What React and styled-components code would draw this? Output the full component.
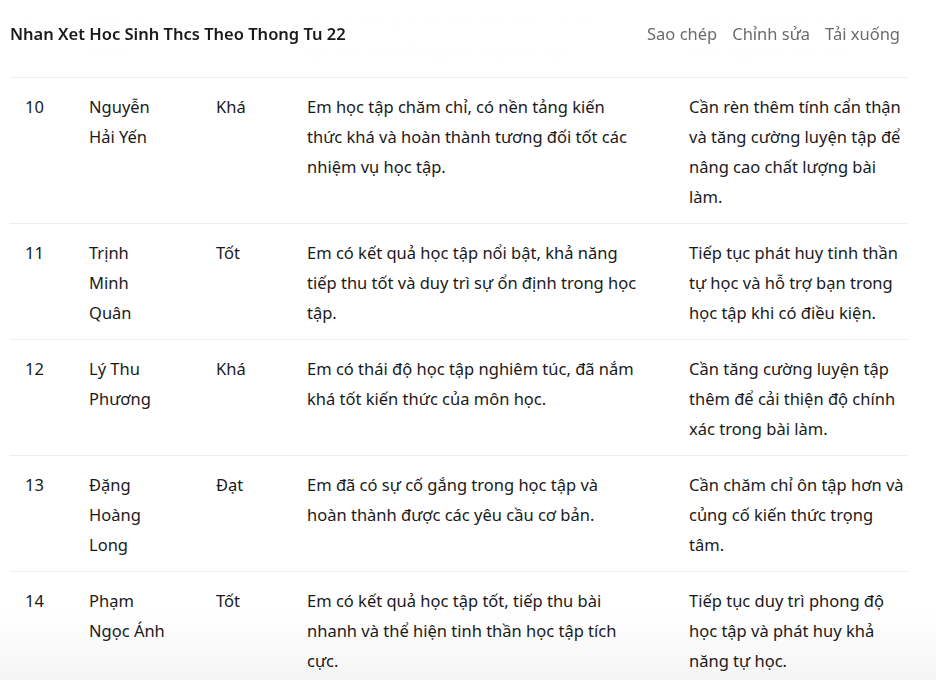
import React, { useLayoutEffect, useRef } from 'react';
import styled, { createGlobalStyle } from 'styled-components';

const rows = [
  { stt: 1, name: 'Nguyễn Văn An', level: 'Tốt', note: 'Em có ý thức học tập tốt, tích cực phát biểu xây dựng bài và hoàn thành xuất sắc nhiệm vụ.', advice: 'Tiếp tục phát huy và giúp đỡ các bạn cùng tiến bộ.' },
  { stt: 2, name: 'Trần Thị Bình', level: 'Khá', note: 'Em chăm chỉ, nắm được kiến thức cơ bản của môn học.', advice: 'Cần mạnh dạn hơn khi trao đổi ý kiến trong lớp.' },
  { stt: 3, name: 'Lê Hoàng Cường', level: 'Đạt', note: 'Em đã cố gắng hoàn thành các yêu cầu cơ bản của môn học.', advice: 'Cần tập trung hơn trong giờ học và làm bài đầy đủ.' },
  { stt: 4, name: 'Phạm Minh Dũng', level: 'Tốt', note: 'Em tiếp thu bài nhanh, vận dụng kiến thức linh hoạt vào thực tế.', advice: 'Tiếp tục duy trì kết quả học tập.' },
  { stt: 5, name: 'Hoàng Thu Hà', level: 'Khá', note: 'Em có tinh thần học tập nghiêm túc, tham gia tích cực hoạt động nhóm.', advice: 'Cần rèn luyện thêm kỹ năng trình bày.' },
  { stt: 6, name: 'Vũ Đức Huy', level: 'Đạt', note: 'Em có tiến bộ so với đầu năm học.', advice: 'Cần ôn tập thường xuyên để củng cố kiến thức.' },
  { stt: 7, name: 'Đỗ Thị Lan', level: 'Tốt', note: 'Em học tập chăm chỉ, có nhiều sáng tạo trong giải quyết vấn đề.', advice: 'Tiếp tục phát huy năng lực tự học.' },
  { stt: 8, name: 'Bùi Văn Nam', level: 'Khá', note: 'Em nắm vững kiến thức cơ bản, làm bài tương đối cẩn thận.', advice: 'Cần luyện tập thêm các dạng bài nâng cao.' },
  { stt: 9, name: 'Ngô Thị Oanh', level: 'Tốt', note: 'Em có kết quả học tập tốt, tích cực tham gia các hoạt động học tập của lớp.', advice: 'Tiếp tục phát huy và chia sẻ kinh nghiệm học tập.' },
  { stt: 10, name: 'Nguyễn Hải Yến', level: 'Khá', note: 'Em học tập chăm chỉ, có nền tảng kiến thức khá và hoàn thành tương đối tốt các nhiệm vụ học tập.', advice: 'Cần rèn thêm tính cẩn thận và tăng cường luyện tập để nâng cao chất lượng bài làm.' },
  { stt: 11, name: 'Trịnh Minh Quân', level: 'Tốt', note: 'Em có kết quả học tập nổi bật, khả năng tiếp thu tốt và duy trì sự ổn định trong học tập.', advice: 'Tiếp tục phát huy tinh thần tự học và hỗ trợ bạn trong học tập khi có điều kiện.' },
  { stt: 12, name: 'Lý Thu Phương', level: 'Khá', note: 'Em có thái độ học tập nghiêm túc, đã nắm khá tốt kiến thức của môn học.', advice: 'Cần tăng cường luyện tập thêm để cải thiện độ chính xác trong bài làm.' },
  { stt: 13, name: 'Đặng Hoàng Long', level: 'Đạt', note: 'Em đã có sự cố gắng trong học tập và hoàn thành được các yêu cầu cơ bản.', advice: 'Cần chăm chỉ ôn tập hơn và củng cố kiến thức trọng tâm.' },
  { stt: 14, name: 'Phạm Ngọc Ánh', level: 'Tốt', note: 'Em có kết quả học tập tốt, tiếp thu bài nhanh và thể hiện tinh thần học tập tích cực.', advice: 'Tiếp tục duy trì phong độ học tập và phát huy khả năng tự học.' },
  { stt: 15, name: 'Trương Văn Quý', level: 'Khá', note: 'Em có ý thức học tập, hoàn thành đầy đủ bài tập được giao.', advice: 'Cần chủ động hơn trong việc tự học ở nhà.' },
];

const GlobalStyle = createGlobalStyle`
  html, body {
    margin: 0;
    padding: 0;
    background: #fff;
  }
  body {
    font-family: 'Noto Sans', 'Open Sans', sans-serif;
    color: #1a1a1a;
  }
`;

const Frame = styled.div`
  position: relative;
  height: 680px;
  overflow: hidden;
`;

const Scroller = styled.div`
  height: 100%;
  overflow-y: auto;
  scrollbar-width: none;
  &::-webkit-scrollbar {
    display: none;
  }
`;

// sticky bar, the rows scroll under it
const Header = styled.header`
  position: sticky;
  top: 0;
  z-index: 2;
  height: 66px;
  display: flex;
  align-items: center;
  justify-content: space-between;
  padding: 0 36px 0 10px;
  background: rgba(255, 255, 255, 0.985);
  backdrop-filter: blur(24px);
`;

const Title = styled.h1`
  margin: 0;
  font-size: 16.5px;
  font-weight: 600;
  color: #1a1a1a;
`;

const Actions = styled.nav`
  display: flex;
  gap: 15px;
`;

const Action = styled.a`
  font-size: 16.5px;
  color: #6b6b6b;
  cursor: pointer;
`;

const Table = styled.div`
  width: 898px;
  margin-left: 10px;
  padding-bottom: 40px;
`;

const Row = styled.div`
  display: grid;
  grid-template-columns: 64px 127px 91px 382px 234px;
  border-bottom: 1px solid #eeeeee;
  font-size: 16.5px;
  line-height: 30px;
  font-weight: ${p => (p.$head ? 600 : 400)};
`;

const Cell = styled.div`
  padding: 14px 33px 11px 15px;
  &:last-child {
    padding-right: 1px;
  }
`;

const Fade = styled.div`
  position: absolute;
  left: 0;
  right: 0;
  bottom: 0;
  height: 72px;
  pointer-events: none;
  mix-blend-mode: multiply;
  background: linear-gradient(to bottom, #ffffff, #f5f5f5);
`;

const Glass = styled.div`
  position: absolute;
  left: 422px;
  top: 590px;
  width: 192px;
  height: 48px;
  border-radius: 24px;
  pointer-events: none;
  backdrop-filter: blur(0.6px);
`;

export default function App() {
  const scrollRef = useRef(null);
  const anchorRef = useRef(null);

  useLayoutEffect(() => {
    const box = scrollRef.current;
    const row = anchorRef.current;
    // row 9's bottom rule sits at y=77
    box.scrollTop = row.offsetTop - box.offsetTop - 78;
  }, []);

  return (
    <Frame>
      <GlobalStyle />
      <Scroller ref={scrollRef}>
        <Header>
          <Title>Nhan Xet Hoc Sinh Thcs Theo Thong Tu 22</Title>
          <Actions>
            <Action>Sao chép</Action>
            <Action>Chỉnh sửa</Action>
            <Action>Tải xuống</Action>
          </Actions>
        </Header>
        <Table>
          <Row $head>
            <Cell>STT</Cell>
            <Cell>Họ và tên</Cell>
            <Cell>Mức đạt</Cell>
            <Cell>Nhận xét</Cell>
            <Cell>Đề xuất</Cell>
          </Row>
          {rows.map(r => (
            <Row key={r.stt} ref={r.stt === 10 ? anchorRef : null}>
              <Cell>{r.stt}</Cell>
              <Cell>{r.name}</Cell>
              <Cell>{r.level}</Cell>
              <Cell>{r.note}</Cell>
              <Cell>{r.advice}</Cell>
            </Row>
          ))}
        </Table>
      </Scroller>
      <Glass />
      <Fade />
    </Frame>
  );
}
